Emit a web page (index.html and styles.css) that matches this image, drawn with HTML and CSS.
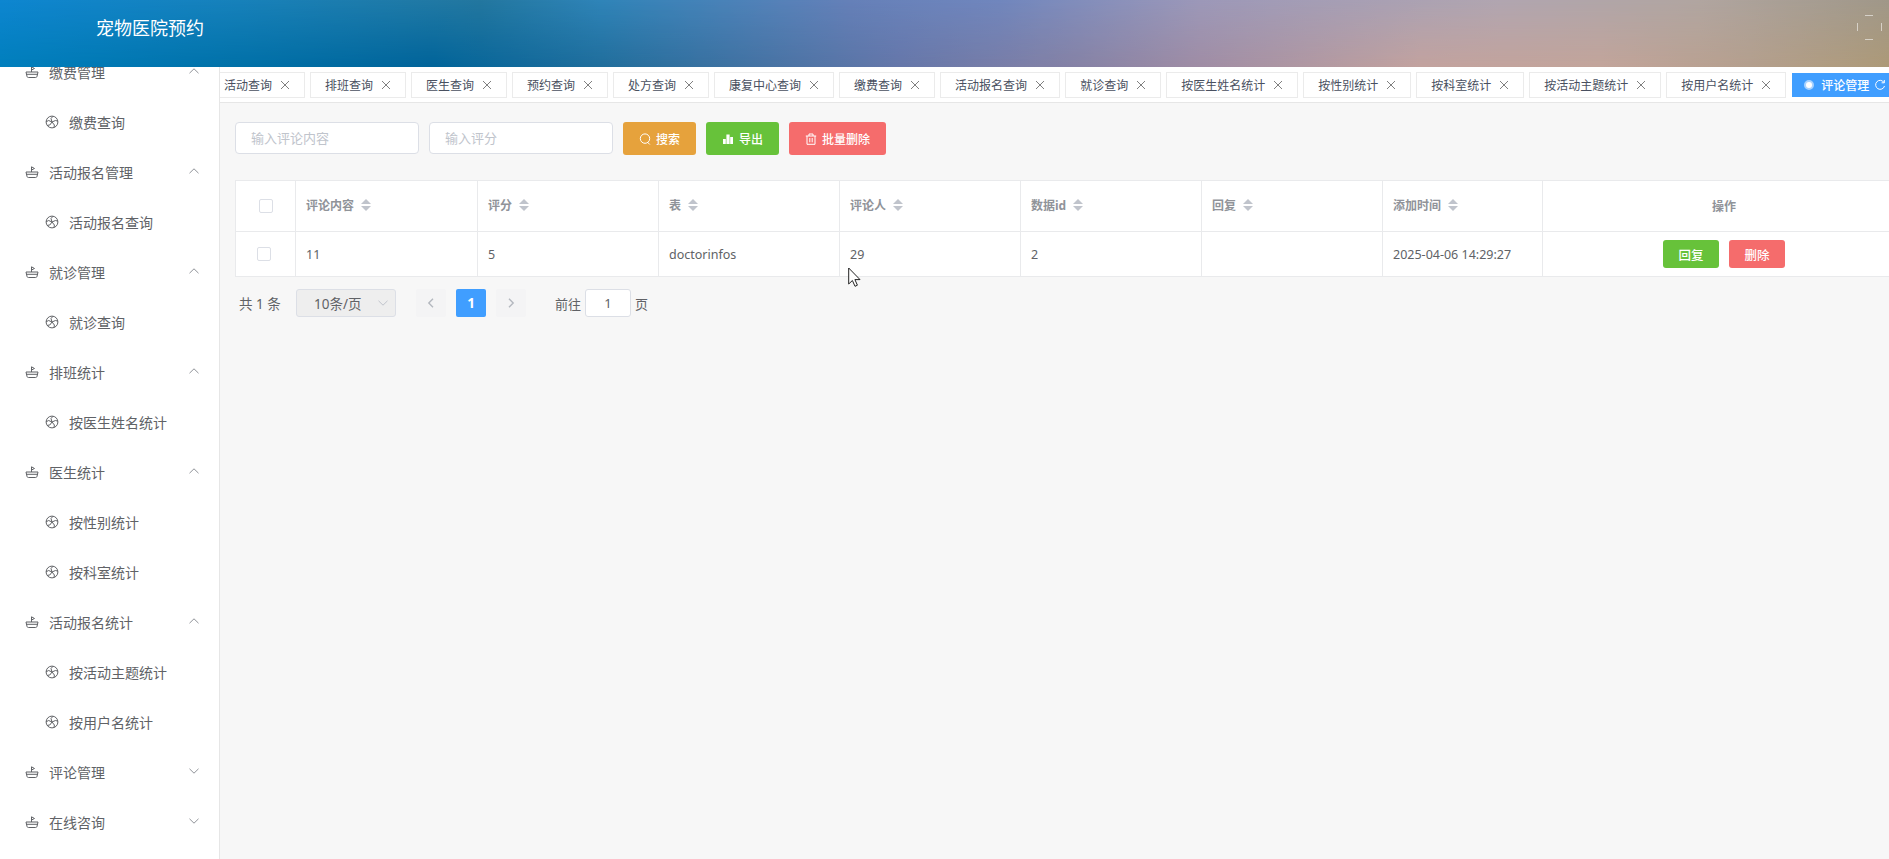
FILE: index.html
```html
<!DOCTYPE html>
<html lang="zh-CN">
<head>
  <meta charset="UTF-8">
  <meta name="viewport" content="width=device-width, initial-scale=1.0">
  <title>宠物医院预约</title>
  <link rel="stylesheet" href="styles.css">
</head>
<body>
  <!-- 图标 -->
  <svg class="sprite" width="0" height="0">
    <symbol id="ship" viewBox="0 0 14 14">
      <path d="M1 7h12l-1 4.400q-.3 1.100-1.400 1.100H3.400q-1.100 0-1.400-1.100zM1.500 9.300h11M6.500 7V1.800L9.500 3.500 6.500 5"/>
    </symbol>
    <symbol id="ball" viewBox="0 0 14 14">
      <circle cx="7" cy="7" r="5.900"/>
      <path d="M7 7L6 3.500 8 1.300M7 7l3.400-1.500 2.400.6M7 7l2.400 3-.4 2.500M7 7l-2.200 3-2.600.4M7 7L3.700 5.500 1.200 6.700"/>
    </symbol>
    <symbol id="up" viewBox="0 0 12 12"><path d="M1.500 8.200L6 3.800l4.500 4.400"/></symbol>
    <symbol id="down" viewBox="0 0 12 12"><path d="M1.500 3.800L6 8.200l4.500-4.400"/></symbol>
    <symbol id="close" viewBox="0 0 12 12"><path d="M2 2l8 8M10 2l-8 8"/></symbol>
  </svg>

  <header class="header">
    <h1 class="title">宠物医院预约</h1>
    <svg class="fullscreen" viewBox="0 0 26 26"><path d="M9 1.500h8M9 25.500h8M1.500 9v8M25.500 9v8"/></svg>
  </header>

  <div class="container">
    <aside class="sidebar">
      <ul class="menu">
        <li class="menu-title"><svg class="icon"><use href="#ship"/></svg>缴费管理<svg class="arrow"><use href="#up"/></svg></li>
        <li class="menu-item"><svg class="icon"><use href="#ball"/></svg>缴费查询</li>
        <li class="menu-title"><svg class="icon"><use href="#ship"/></svg>活动报名管理<svg class="arrow"><use href="#up"/></svg></li>
        <li class="menu-item"><svg class="icon"><use href="#ball"/></svg>活动报名查询</li>
        <li class="menu-title"><svg class="icon"><use href="#ship"/></svg>就诊管理<svg class="arrow"><use href="#up"/></svg></li>
        <li class="menu-item"><svg class="icon"><use href="#ball"/></svg>就诊查询</li>
        <li class="menu-title"><svg class="icon"><use href="#ship"/></svg>排班统计<svg class="arrow"><use href="#up"/></svg></li>
        <li class="menu-item"><svg class="icon"><use href="#ball"/></svg>按医生姓名统计</li>
        <li class="menu-title"><svg class="icon"><use href="#ship"/></svg>医生统计<svg class="arrow"><use href="#up"/></svg></li>
        <li class="menu-item"><svg class="icon"><use href="#ball"/></svg>按性别统计</li>
        <li class="menu-item"><svg class="icon"><use href="#ball"/></svg>按科室统计</li>
        <li class="menu-title"><svg class="icon"><use href="#ship"/></svg>活动报名统计<svg class="arrow"><use href="#up"/></svg></li>
        <li class="menu-item"><svg class="icon"><use href="#ball"/></svg>按活动主题统计</li>
        <li class="menu-item"><svg class="icon"><use href="#ball"/></svg>按用户名统计</li>
        <li class="menu-title"><svg class="icon"><use href="#ship"/></svg>评论管理<svg class="arrow"><use href="#down"/></svg></li>
        <li class="menu-title"><svg class="icon"><use href="#ship"/></svg>在线咨询<svg class="arrow"><use href="#down"/></svg></li>
      </ul>
    </aside>

    <main class="main">
      <!-- 标签页 -->
      <nav class="tabs">
        <span class="tab">活动查询<svg><use href="#close"/></svg></span>
        <span class="tab">排班查询<svg><use href="#close"/></svg></span>
        <span class="tab">医生查询<svg><use href="#close"/></svg></span>
        <span class="tab">预约查询<svg><use href="#close"/></svg></span>
        <span class="tab">处方查询<svg><use href="#close"/></svg></span>
        <span class="tab">康复中心查询<svg><use href="#close"/></svg></span>
        <span class="tab">缴费查询<svg><use href="#close"/></svg></span>
        <span class="tab">活动报名查询<svg><use href="#close"/></svg></span>
        <span class="tab">就诊查询<svg><use href="#close"/></svg></span>
        <span class="tab">按医生姓名统计<svg><use href="#close"/></svg></span>
        <span class="tab">按性别统计<svg><use href="#close"/></svg></span>
        <span class="tab">按科室统计<svg><use href="#close"/></svg></span>
        <span class="tab">按活动主题统计<svg><use href="#close"/></svg></span>
        <span class="tab">按用户名统计<svg><use href="#close"/></svg></span>
        <span class="tab active"><i class="dot"></i>评论管理<svg viewBox="0 0 12 12"><path d="M10 3.500A4.500 4.500 0 1 0 10.500 7M10.300 1v2.800H7.600"/></svg></span>
      </nav>

      <div class="content">
        <!-- 搜索栏 -->
        <form class="search">
          <input class="search-input" type="text" placeholder="输入评论内容">
          <input class="search-input" type="text" placeholder="输入评分">
          <button class="btn warning" type="button"><svg viewBox="0 0 12 12"><circle cx="6" cy="5.600" r="4.700"/><path d="M8.300 9l2.500 2.500"/></svg>搜索</button>
          <button class="btn success" type="button"><svg viewBox="0 0 12 12"><path class="solid" d="M1 6h2.800v5H1zM4.400 1.500h3.200V11H4.400zM8.200 4H11v7H8.200z"/></svg>导出</button>
          <button class="btn danger" type="button"><svg viewBox="0 0 12 12"><path d="M.8 3h10.400M2 3v8.300h8V3M4 3V1h4v2M4.800 5v4.300M7.200 5v4.300"/></svg>批量删除</button>
        </form>

        <table class="table">
          <colgroup>
            <col class="col-check"><col class="col-first"><col class="col"><col class="col"><col class="col"><col class="col"><col class="col"><col class="col-time"><col class="col-action">
          </colgroup>
          <thead>
            <tr>
              <th class="check"><span class="checkbox"></span></th>
              <th><div class="cell">评论内容<span class="sort"></span></div></th>
              <th><div class="cell">评分<span class="sort"></span></div></th>
              <th><div class="cell">表<span class="sort"></span></div></th>
              <th><div class="cell">评论人<span class="sort"></span></div></th>
              <th><div class="cell">数据id<span class="sort"></span></div></th>
              <th><div class="cell">回复<span class="sort"></span></div></th>
              <th><div class="cell">添加时间<span class="sort"></span></div></th>
              <th class="center">操作</th>
            </tr>
          </thead>
          <tbody>
            <tr>
              <td class="check"><span class="checkbox"></span></td>
              <td>11</td>
              <td>5</td>
              <td>doctorinfos</td>
              <td>29</td>
              <td>2</td>
              <td></td>
              <td>2025-04-06 14:29:27</td>
              <td>
                <div class="actions">
                  <button class="btn small success" type="button">回复</button>
                  <button class="btn small danger" type="button">删除</button>
                </div>
              </td>
            </tr>
          </tbody>
        </table>

        <!-- 分页 -->
        <div class="pagination">
          <span class="total">共 1 条</span>
          <span class="page-size">10条/页<svg><use href="#down"/></svg></span>
          <button class="page" type="button"><svg viewBox="0 0 12 12"><path d="M8 1.800L3.800 6 8 10.200"/></svg></button>
          <button class="page current" type="button">1</button>
          <button class="page" type="button"><svg viewBox="0 0 12 12"><path d="M4 1.800L8.200 6 4 10.200"/></svg></button>
          <span class="jump">前往<input type="text" value="1">页</span>
        </div>
      </div>
    </main>
  </div>

  <svg class="cursor" viewBox="0 0 13 21"><path d="M.7 1v16l3.700-3.500 2.600 5.800 2.400-1.100-2.500-5.600h5.100z"/></svg>
</body>
</html>
```
FILE: styles.css
```css
* {
  box-sizing: border-box;
}

body {
  margin: 0;
  height: 100vh;
  overflow: hidden;
  display: flex;
  flex-direction: column;
  background: #f7f7f7;
  color: #606266;
  font-family: "Noto Sans", "Noto Sans CJK SC", sans-serif;
  font-size: 12px;
}

svg {
  fill: none;
  stroke: currentColor;
  flex-shrink: 0;
}

.sprite {
  position: absolute;
}

/* 顶部 */
.header {
  position: relative;
  z-index: 1;
  height: 67px;
  flex-shrink: 0;
  display: flex;
  justify-content: space-between;
  padding: 0 7px 0 96px;
  color: #fff;
  background: linear-gradient(90deg, #007fbd 0, #0072aa 220px, #00649a 430px, #206e9c 600px, #6677aa 900px, #8582a6 1070px, #a08da5 1200px, #c3a39f 1420px, #c3a59b 1600px, #b5a08e 1750px, #ad9a78 1889px);
}

.header::before {
  content: "";
  position: absolute;
  inset: 0;
  background: linear-gradient(90deg, #0d86d0 0, #1781ba 240px, #23779f 480px, #2f84b8 600px, #6580b8 850px, #7086bd 1000px, #9c98b8 1200px, #b0a5b0 1500px, #b0a5a0 1700px, #9f9788 1889px);
  -webkit-mask-image: linear-gradient(#000, transparent);
  mask-image: linear-gradient(#000, transparent);
}

.title {
  position: relative;
  margin: 0;
  font-size: 18px;
  font-weight: 400;
  line-height: 56px;
}

.fullscreen {
  position: relative;
  width: 26px;
  height: 26px;
  margin-top: 14px;
  opacity: 0.55;
}

.container {
  flex: 1;
  display: flex;
  min-height: 0;
}

/* 侧边菜单 */
.sidebar {
  width: 220px;
  flex-shrink: 0;
  overflow: hidden;
  background: #fff;
  border-right: 1px solid #e6e6e6;
}

.menu {
  list-style: none;
  margin: -20px 0 0;
  padding: 0;
  font-size: 14px;
}

.menu-title,
.menu-item {
  display: flex;
  align-items: center;
  height: 50px;
  padding: 0 19px 0 25px;
}

.menu-item {
  padding-left: 45px;
}

.icon {
  width: 14px;
  height: 14px;
  margin-right: 10px;
}

.arrow {
  width: 12px;
  height: 12px;
  margin-left: auto;
  margin-bottom: 3px;
  color: #909399;
}

.main {
  flex: 1;
  min-width: 0;
  overflow: hidden;
}

/* 标签页 */
.tabs {
  display: flex;
  justify-content: flex-start;
  align-items: center;
  gap: 5px;
  height: 36px;
  padding-top: 1px;
  background: #fff;
  border-bottom: 1px solid #e6e6e6;
}

.tab {
  display: flex;
  align-items: center;
  flex-shrink: 0;
  height: 26px;
  padding: 0 13px 0 14px;
  border: 1px solid #ebebeb;
  color: #495060;
  white-space: nowrap;
}

.tab:first-child {
  margin-left: -11px;
}

.tab svg {
  width: 12px;
  height: 12px;
  margin-left: 7px;
  color: #808080;
}

.tab.active {
  height: 24px;
  margin-left: 1px;
  padding-left: 11px;
  border-color: #409eff;
  background: #409eff;
  color: #fff;
  font-weight: 500;
}

.tab.active svg {
  margin-left: 5px;
  color: #fff;
}

.dot {
  width: 10px;
  height: 10px;
  margin-right: 7px;
  border: 2px solid #a8d2ff;
  border-radius: 50%;
  background: #fff;
}

.content {
  padding: 19px 0 0 15px;
}

/* 搜索栏 */
.search {
  display: flex;
  gap: 10px;
  margin-bottom: 25px;
}

.search-input {
  width: 184px;
  height: 32px;
  padding: 0 15px 1px;
  border: 1px solid #dcdfe6;
  border-radius: 4px;
  font: inherit;
  font-size: 13px;
}

.search-input::placeholder {
  color: #c0c4cc;
}

.btn {
  display: flex;
  align-items: center;
  justify-content: center;
  gap: 5px;
  height: 33px;
  padding: 0 16px;
  border: none;
  border-radius: 3px;
  color: #fff;
  font: inherit;
  font-weight: 500;
}

.btn svg {
  width: 12px;
  height: 12px;
}

.solid {
  fill: currentColor;
  stroke: none;
}

.btn.small {
  width: 56px;
  height: 28px;
  padding: 0;
}

.warning { background: #e6a23c; }
.success { background: #67c23a; }
.danger { background: #f56c6c; }

/* 表格 */
.table {
  width: 1670px;
  table-layout: fixed;
  border-collapse: collapse;
  background: #fff;
}

.col-check { width: 60px; }
.col-first { width: 182px; }
.col { width: 181px; }
.col-time { width: 160px; }
.col-action { width: 363px; }

.table th,
.table td {
  padding: 0 10px;
  border: 1px solid #e9eaec;
  text-align: left;
}

.table th {
  height: 51px;
  color: #909399;
  font-weight: 700;
}

.table td {
  height: 45px;
  font-size: 12.5px;
}

.table .center {
  text-align: center;
}

.cell {
  display: flex;
  align-items: center;
  padding-bottom: 3px;
}

/* 排序三角 */
.sort {
  display: flex;
  flex-direction: column;
  gap: 2px;
  margin: 1px 0 0 7px;
}

.sort::before,
.sort::after {
  content: "";
  border: 5px solid transparent;
}

.sort::before {
  border-top: none;
  border-bottom-color: #c0c4cc;
}

.sort::after {
  border-bottom: none;
  border-top-color: #c0c4cc;
}

.checkbox {
  display: block;
  width: 14px;
  height: 14px;
  border: 1px solid #dcdfe6;
  border-radius: 2px;
  background: #fff;
}

.table th.check {
  padding-left: 23px;
}

.table td.check {
  padding-left: 21px;
}

.actions {
  display: flex;
  justify-content: center;
  gap: 10px;
}

/* 分页 */
.pagination {
  display: flex;
  align-items: center;
  margin-top: 12px;
  padding-left: 4px;
  font-size: 13.5px;
}

.total {
  width: 57px;
  padding-bottom: 1px;
}

.page-size {
  display: flex;
  align-items: center;
  justify-content: space-between;
  width: 100px;
  height: 28px;
  margin-right: 20px;
  padding: 0 6px 1px 17px;
  border: 1px solid #dcdfe6;
  border-radius: 3px;
  background: #eee;
}

.page-size svg {
  width: 12px;
  height: 12px;
  color: #c0c4cc;
}

.page {
  display: flex;
  align-items: center;
  justify-content: center;
  width: 30px;
  height: 28px;
  margin-right: 10px;
  padding: 0;
  border: none;
  border-radius: 2px;
  background: #f4f4f5;
  color: #b4b8bf;
  font: inherit;
}

.page svg {
  width: 12px;
  height: 12px;
  stroke-width: 1.4;
}

.page.current {
  background: #409eff;
  color: #fff;
  font-weight: 700;
}

.jump {
  display: flex;
  align-items: center;
  margin-left: 19px;
  font-size: 13px;
}

.jump input {
  width: 46px;
  height: 28px;
  margin: 0 4px;
  padding: 0;
  border: 1px solid #dcdfe6;
  border-radius: 3px;
  color: #606266;
  font: inherit;
  text-align: center;
}

/* 鼠标指针 */
.cursor {
  position: absolute;
  left: 848px;
  top: 267px;
  z-index: 2;
  width: 13px;
  height: 21px;
  fill: #fff;
  stroke: #222;
}
```
